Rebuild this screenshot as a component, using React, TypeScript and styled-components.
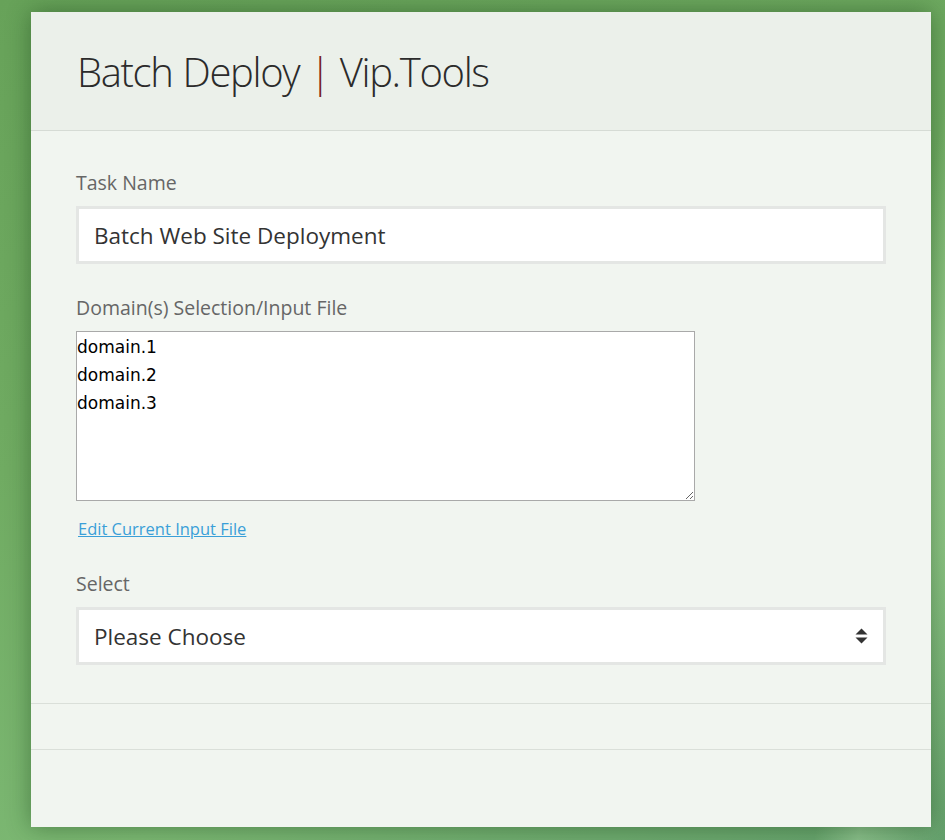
import React from "react";
import styled, { createGlobalStyle } from "styled-components";

const Global = createGlobalStyle`
  html, body { margin: 0; padding: 0; }
  body {
    width: 945px;
    height: 840px;
    overflow: hidden;
    font-family: "Open Sans", "Liberation Sans", sans-serif;
    background:
      linear-gradient(100deg, rgba(255,255,255,0) 0%, rgba(255,255,255,0) 88%, rgba(200,240,190,0.35) 92%, rgba(255,255,255,0) 100%),
      linear-gradient(160deg, #67a259 0%, #70ab62 40%, #7cb873 75%, #64a06c 100%);
  }
`;

const Page = styled.div`
  padding: 12px 14px 13px 31px;
`;

const Card = styled.div`
  width: 900px;
  background: #f1f5f0;
  box-shadow: 0 0 22px rgba(20, 60, 20, 0.45);
  display: flex;
  flex-direction: column;
`;

const Header = styled.div`
  background: #ebf0ea;
  padding: 38px 46px 36px;
  border-bottom: 1px solid #d6dbd5;
`;

const Title = styled.h1`
  margin: 0;
  font-family: "Open Sans", sans-serif;
  font-weight: 300;
  font-size: 40px;
  line-height: 44px;
  color: #2b2b2b;
  letter-spacing: -1.35px;
  word-spacing: 1px;
`;

const Pipe = styled.span`
  color: #7a2218;
`;

const Body = styled.div`
  padding: 40px 45px 38px;
  display: flex;
  flex-direction: column;
  border-bottom: 1px solid #dadfd9;
`;

const Label = styled.label<{ $top?: number }>`
  display: block;
  font-size: 19.5px;
  line-height: 24px;
  color: #666;
  margin-top: ${(p) => p.$top ?? 0}px;
  margin-bottom: 11px;
`;

const TextInput = styled.input`
  box-sizing: border-box;
  width: 810px;
  height: 58px;
  border: 3px solid #e4e6e4;
  background: #fff;
  padding: 0 15px;
  font-family: "Open Sans", sans-serif;
  font-size: 22.5px;
  color: #333;
  outline: none;
`;

const Area = styled.textarea`
  box-sizing: border-box;
  width: 619px;
  height: 170px;
  border: 1px solid #a9a9a9;
  background: #fff;
  padding: 1px 0 0 0;
  font-family: "DejaVu Sans", sans-serif;
  font-size: 17px;
  line-height: 28px;
  color: #000;
  resize: both;
  outline: none;
  margin: 0;
  display: block;
`;

const Link = styled.a`
  display: inline-block;
  margin-top: 18px;
  margin-left: 2px;
  font-size: 16.5px;
  line-height: 20px;
  color: #3a9fd8;
  text-decoration: underline;
  align-self: flex-start;
`;

const SelectBox = styled.div`
  box-sizing: border-box;
  width: 810px;
  height: 58px;
  border: 3px solid #e4e6e4;
  background: #fff;
  padding: 0 15px 0 15px;
  display: flex;
  align-items: center;
  justify-content: space-between;
  font-size: 22.5px;
  color: #333;
`;

const Spacer = styled.div<{ $h: number }>`
  height: ${(p) => p.$h}px;
`;

const Section = styled.div`
  height: 45px;
  border-bottom: 1px solid #dadfd9;
`;

export default function App() {
  return (
    <>
      <Global />
      <Page>
        <Card>
          <Header>
            <Title>
              Batch Deploy <Pipe>|</Pipe> Vip.Tools
            </Title>
          </Header>
          <Body>
            <Label>Task Name</Label>
            <TextInput defaultValue="Batch Web Site Deployment" />
            <Label $top={32}>Domain(s) Selection/Input File</Label>
            <Area defaultValue={"domain.1\ndomain.2\ndomain.3"} />
            <Link href="#">Edit Current Input File</Link>
            <Label $top={33}>Select</Label>
            <SelectBox>
              <span>Please Choose</span>
              <svg width="13" height="18" viewBox="0 0 13 18">
                <path d="M6.5 1.5 L12.5 7.5 L0.5 7.5 Z" fill="#333" />
                <path d="M6.5 16.5 L12.5 10.5 L0.5 10.5 Z" fill="#333" />
              </svg>
            </SelectBox>
          </Body>
          <Section />
          <Spacer $h={77} />
        </Card>
      </Page>
    </>
  );
}
